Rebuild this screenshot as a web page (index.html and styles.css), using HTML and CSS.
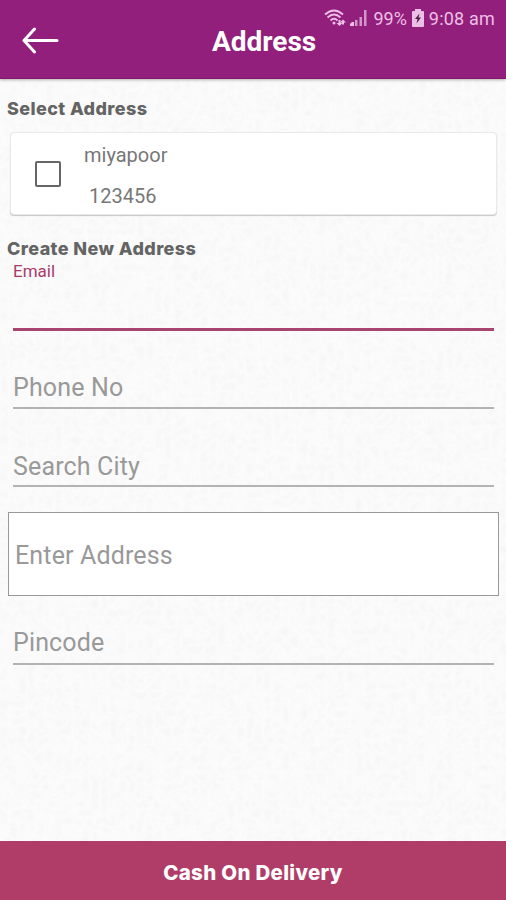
FILE: index.html
```html
<!DOCTYPE html>
<html lang="en">
  <head>
    <meta charset="UTF-8" />
    <meta name="viewport" content="width=device-width, initial-scale=1.0" />
    <title>Address</title>
    <link rel="stylesheet" href="styles.css">
  </head>
  <body>
    <svg class="texture" aria-hidden="true">
      <filter id="paper" x="0" y="0" width="100%" height="100%">
        <feTurbulence type="turbulence" baseFrequency="0.11" numOctaves="3" seed="4" />
        <feColorMatrix values="0 0 0 0 0.55  0 0 0 0 0.55  0 0 0 0 0.55  0.13 0 0 0 0" />
      </filter>
      <rect width="100%" height="100%" filter="url(#paper)" />
    </svg>

    <header class="header">
      <svg class="back" width="38" height="28" viewBox="0 0 38 28">
        <path d="M13.500 2 L3 13.500 L13.500 25 M3 13.500 H36" />
      </svg>
      <h1>Address</h1>
      <div class="status">
        <svg width="24" height="19" viewBox="0 0 24 19">
          <path class="wave" d="M1 5.500 Q10 -2.500 19 5.500 M3.500 8.500 Q10 2.500 16.500 8.500 M6.500 11.500 Q10 8 13.500 11.500" />
          <circle cx="10" cy="14" r="1.500" />
          <path d="M14.500 11 h2 v3 h2 l-3 3 l-3 -3 h2z M19 10.500 l3 3 h-2 v2 h-2 v-2 h-2z" />
        </svg>
        <svg width="18" height="18" viewBox="0 0 18 18">
          <path d="M0 17 v-2 l2 -2 h2 v4z" />
          <path d="M5 17 v-6 h2.500 v6z M9.500 17 v-9 h2.500 v9z M14 17 V1 h2.500 V17z" class="bars" />
        </svg>
        <span class="percent">99%</span>
        <svg width="12" height="18" viewBox="0 0 12 18">
          <path d="M3 0 h6 v2 h2 q1 0 1 1 v14 q0 1 -1 1 h-10 q-1 0 -1 -1 v-14 q0 -1 1 -1 h2z" />
          <path class="bolt" d="M7.500 4.500 L3 10 h2.500 L4.500 14.500 L9 8.500 H6.500z" />
        </svg>
        <span class="time">9:08 am</span>
      </div>
    </header>

    <main class="content">
      <h2>Select Address</h2>
      <label class="card">
        <input type="checkbox" class="check" />
        <span class="saved">
          <span class="city">miyapoor</span>
          <span class="pin">123456</span>
        </span>
      </label>

      <h2 class="create">Create New Address</h2>
      <form>
        <div class="field active">
          <label for="email">Email</label>
          <input type="email" id="email" />
        </div>
        <div class="field phone">
          <input type="tel" placeholder="Phone No" />
        </div>
        <div class="field city-field">
          <input type="text" placeholder="Search City" />
        </div>
        <input class="address" type="text" placeholder="Enter Address" />
        <div class="field pincode">
          <input type="text" placeholder="Pincode" />
        </div>
      </form>
    </main>

    <button class="cod">Cash On Delivery</button>
  </body>
</html>
```
FILE: styles.css
```css
* {
  margin: 0;
  padding: 0;
  box-sizing: border-box;
  font-family: Roboto, Arial, sans-serif;
}

body {
  display: flex;
  flex-direction: column;
  height: 100vh;
  overflow: hidden;
  background-color: #fcfcfc;
}

.texture {
  position: absolute;
  z-index: -1;
  width: 100%;
  height: 100%;
}

.header {
  position: relative;
  display: flex;
  align-items: center;
  height: 79px;
  padding: 3px 0 0 21px;
  background-color: #921f7b;
  border-bottom: 1px solid #83166e;
  box-shadow: 0 1px 3px rgba(0, 0, 0, 0.3);
  color: white;
}

.back {
  fill: none;
  stroke: white;
  stroke-width: 3;
  stroke-linecap: round;
  stroke-linejoin: round;
}

.header h1 {
  margin-left: 153px;
  padding-top: 2px;
  font-size: 28px;
  line-height: 32px;
  font-weight: 700;
}

.status {
  position: absolute;
  top: 8px;
  right: 11px;
  display: flex;
  align-items: center;
  height: 20px;
  color: #eebfe6;
  font-size: 18px;
}

.status svg {
  fill: #eebfe6;
  margin-right: 2px;
}

.status .wave {
  fill: none;
  stroke: #eebfe6;
  stroke-width: 1.8;
}

.status .bars {
  fill: #d495ca;
}

.status .bolt {
  fill: #4a2045;
}

.percent {
  margin: 0 5px 0 3px;
}

.time {
  margin-left: 3px;
  letter-spacing: 0.2px;
}

.content {
  flex-grow: 1;
  padding: 18px 7px 0;
}

.content h2 {
  font-family: Inter, sans-serif;
  font-size: 18px;
  line-height: 24px;
  font-weight: 800;
  letter-spacing: 0.4px;
  color: #646464;
}

.card {
  display: flex;
  align-items: center;
  height: 83px;
  margin: 11px 2px 0 3px;
  padding-left: 24px;
  background-color: white;
  border: 1px solid #e9e9e9;
  border-radius: 4px;
  box-shadow: 0 1px 1px rgba(0, 0, 0, 0.2);
}

.check {
  appearance: none;
  width: 26px;
  height: 26px;
  border: 2px solid #666;
  border-radius: 2px;
}

.saved {
  display: flex;
  flex-direction: column;
  gap: 17px;
  margin-left: 23px;
  padding-top: 3px;
  font-size: 20px;
  line-height: 24px;
  color: #777;
}

.pin {
  padding-left: 5px;
}

.content .create {
  margin-top: 22px;
}

.field {
  display: flex;
  flex-direction: column;
  margin: 0 5px 0 6px;
  border-bottom: 2px solid #b3b3b3;
}

.field input {
  height: 32px;
  background: none;
  border: none;
  outline: none;
  font-size: 25px;
  letter-spacing: 0.15px;
}

input::placeholder {
  color: #999;
}

.active {
  height: 70px;
  border-bottom: 3px solid #a74570;
}

.active label {
  font-size: 17px;
  line-height: 20px;
  color: #a83a6b;
}

.phone {
  margin-top: 40px;
  padding-bottom: 4px;
}

.city-field {
  margin-top: 41px;
  padding-bottom: 3px;
}

.address {
  display: block;
  width: 491px;
  height: 84px;
  margin: 25px 0 0 1px;
  padding: 2px 0 0 6px;
  border: 1px solid #999;
  background-color: white;
  font-size: 25px;
  letter-spacing: 0.15px;
}

.pincode {
  margin-top: 30px;
  padding-bottom: 5px;
}

.cod {
  height: 59px;
  padding-top: 3px;
  background-color: #b03c68;
  color: white;
  border: none;
  font-family: Inter, sans-serif;
  font-size: 20.5px;
  font-weight: 800;
  letter-spacing: 0.3px;
}
```
